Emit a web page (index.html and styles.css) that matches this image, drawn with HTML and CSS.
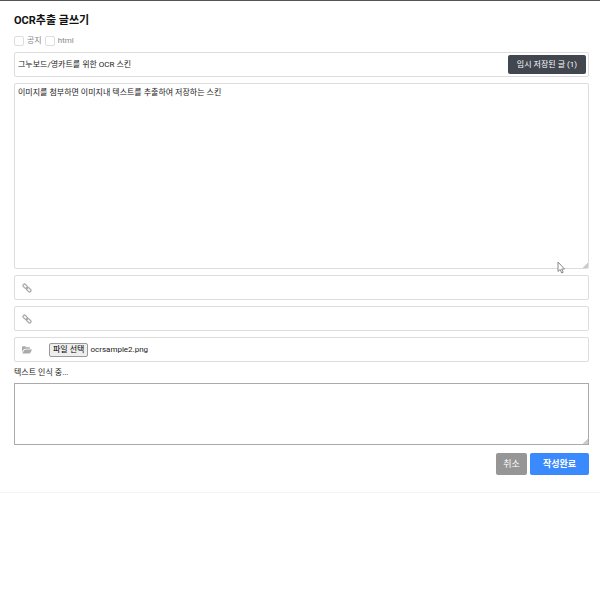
FILE: index.html
```
<!DOCTYPE html>
<html lang="ko">
<head>
<meta charset="utf-8">
<meta name="viewport" content="width=device-width, initial-scale=1">
<title>OCR추출 글쓰기</title>
<link rel="stylesheet" href="styles.css">
</head>
<body>

<section id="bo_w">
	<h2 class="title">OCR추출 글쓰기</h2>

	<form class="write_form">
		<div class="options">
			<input type="checkbox" id="notice"><label for="notice">공지</label>
			<input type="checkbox" id="html"><label for="html">html</label>
		</div>

		<div class="field subject">
			<input type="text" class="subject_input" aria-label="제목" value="그누보드/영카트를 위한 OCR 스킨">
			<button type="button" class="btn_save">임시 저장된 글 (1)</button>
		</div>

		<textarea class="content" aria-label="내용" spellcheck="false">이미지를 첨부하면 이미지내 텍스트를 추출하여 저장하는 스킨</textarea>

		<div class="field">
			<label class="icon" for="link1" aria-label="링크 1">
				<svg viewBox="0 0 16 16"><g fill="none" stroke="#aaa" stroke-width="2"><rect x="1.2" y="3" width="8" height="4.6" rx="2.1" transform="rotate(45 5.2 5.3)"/><rect x="6.8" y="8.4" width="8" height="4.6" rx="2.1" transform="rotate(45 10.8 10.7)"/><path d="M6.5 6.5l3 3"/></g></svg>
			</label>
			<input type="text" id="link1" class="link_input">
		</div>

		<div class="field">
			<label class="icon" for="link2" aria-label="링크 2">
				<svg viewBox="0 0 16 16"><g fill="none" stroke="#aaa" stroke-width="2"><rect x="1.2" y="3" width="8" height="4.6" rx="2.1" transform="rotate(45 5.2 5.3)"/><rect x="6.8" y="8.4" width="8" height="4.6" rx="2.1" transform="rotate(45 10.8 10.7)"/><path d="M6.5 6.5l3 3"/></g></svg>
			</label>
			<input type="text" id="link2" class="link_input">
		</div>

		<div class="field">
			<span class="icon">
				<svg viewBox="0 0 16 16"><path fill="#aaa" d="M0 11V3.5Q0 2 1.500 2H5Q6.200 2 6.200 3.500H11.500Q13 3.500 13 5V6H5Q3.500 6 2.600 7.200zM.6 13L3.500 8.300Q4.200 7 5.500 7H15.500Q16.300 7 15.800 8L13.400 12.200Q12.700 13.500 11.300 13.500H1Q.3 13.500.6 13z"/></svg>
			</span>
			<input type="file" id="bf_file" class="file_input">
			<label for="bf_file" class="btn_file">파일 선택</label>
			<span class="file_name">ocrsample2.png</span>
		</div>

		<label class="status" for="ocr_text">텍스트 인식 중...</label>
		<textarea id="ocr_text" class="result"></textarea>

		<div class="buttons">
			<button type="button" class="btn btn_cancel">취소</button>
			<button type="submit" class="btn btn_submit">작성완료</button>
		</div>
	</form>
</section>

<svg class="cursor" viewBox="0 0 8 13"><path d="M1 1v9.500l2.200-2 1.500 3.500 1.500-.7-1.500-3.300H7.500z" fill="#fff" stroke="#888"/></svg>

</body>
</html>
```
FILE: styles.css
```
* {
	box-sizing: border-box;
}

body, input, textarea, button {
	font-family: Roboto, "Noto Sans CJK KR", sans-serif;
	font-size: 8px;
	line-height: 12px;
	color: #222;
}

body {
	margin: 0;
	background: #fff;
	border-top: 1px solid #555;
}

#bo_w {
	padding: 12px 11px 17px 14px;
	border-bottom: 1px solid #f3f3f3;
}

.title {
	margin: 0 0 7px;
	font-size: 11px;
	line-height: 15px;
	color: #111;
}

.options {
	display: flex;
	align-items: center;
	gap: 3px;
	height: 12px;
	margin-bottom: 5px;
	color: #888;
}

.options input {
	appearance: none;
	width: 10px;
	height: 10px;
	margin: 0;
	border: 1px solid #ddd;
	border-radius: 2px;
	background: #fff;
}

.field {
	display: flex;
	align-items: center;
	height: 25px;
	margin-bottom: 6px;
	border: 1px solid #ddd;
	border-radius: 2px;
}

.subject {
	padding: 0 2px 0 3px;
}

.subject_input, .link_input {
	flex: 1;
	min-width: 0;
	padding: 0;
	border: 0;
	outline: 0;
	background: none;
}

.btn_save {
	height: 19px;
	padding: 0 9px;
	border: 0;
	border-radius: 2px;
	background: #41464f;
	color: #fff;
}

textarea {
	display: block;
	width: 100%;
	margin: 0;
	padding: 3px;
	outline: 0;
	background: #fff;
	resize: vertical;
}

textarea::-webkit-resizer {
	background: linear-gradient(135deg, transparent 50%, #ccc 50%) no-repeat right bottom / 5px 5px;
}

.content {
	height: 186px;
	margin-bottom: 6px;
	border: 1px solid #ddd;
	border-radius: 2px;
}

.icon {
	display: flex;
	width: 34px;
	padding-left: 7px;
}

.icon svg {
	width: 10px;
	height: 10px;
}

.file_input {
	position: absolute;
	width: 1px;
	height: 1px;
	opacity: 0;
}

.btn_file {
	padding: 0 3px;
	border: 1px solid #999;
	border-radius: 2px;
	background: #eee;
	color: #000;
}

.file_name {
	padding-left: 2px;
}

.status {
	display: block;
	margin-bottom: 5px;
	line-height: 10px;
}

.result {
	height: 62px;
	margin-bottom: 8px;
	border: 1px solid #aaa;
	border-radius: 0;
}

.buttons {
	display: flex;
	justify-content: flex-end;
	gap: 3px;
}

.btn {
	height: 22px;
	padding: 0 7px;
	border: 0;
	border-radius: 2px;
	font-size: 9px;
	color: #fff;
}

.btn_cancel {
	background: #969696;
}

.btn_submit {
	padding: 0 13px;
	background: #3a8afd;
	font-weight: bold;
}

/* mouse pointer floating over the editor */
.cursor {
	position: absolute;
	top: 261px;
	left: 557px;
	width: 8px;
	height: 13px;
}
```
